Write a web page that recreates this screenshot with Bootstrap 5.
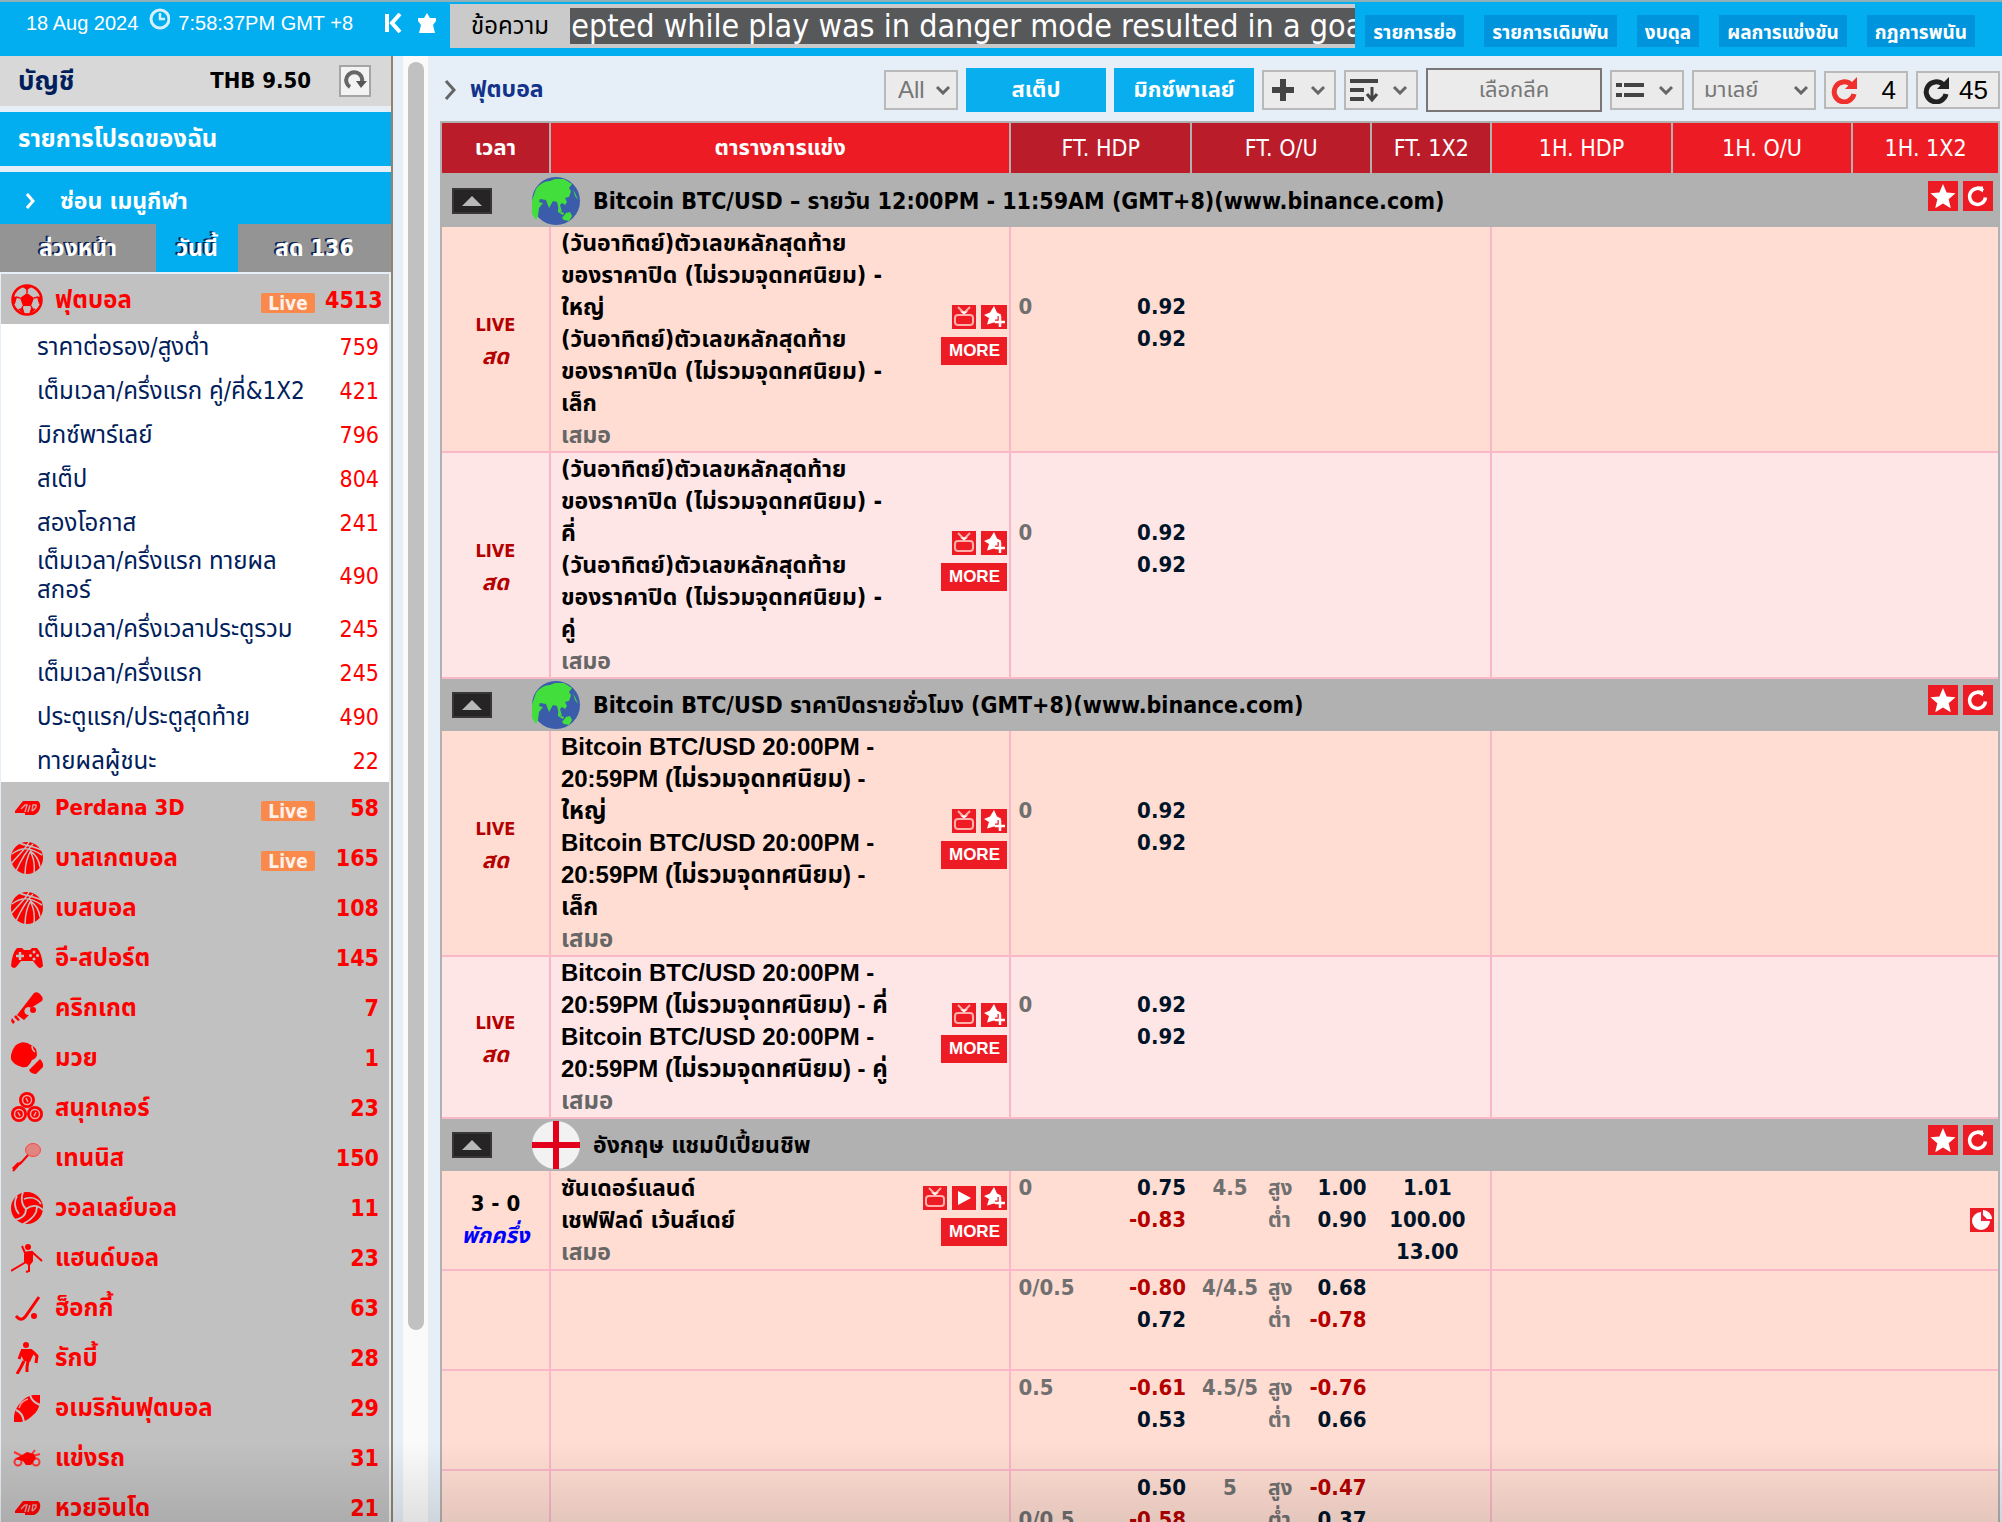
<!DOCTYPE html>
<html lang="th">
<head>
<meta charset="utf-8">
<meta name="viewport" content="width=device-width, initial-scale=1">
<title>ฟุตบอล</title>
<link href="https://cdn.jsdelivr.net/npm/bootstrap@5.3.0/dist/css/bootstrap.min.css" rel="stylesheet">
<script src="https://cdn.jsdelivr.net/npm/bootstrap@5.3.0/dist/js/bootstrap.bundle.min.js"></script>
<style>
:root{--sky:#02adf0;--red:#ed1c24;--deep:#bb1c2a;--pink:#f8b8c8;--grey:#b1b1b1;--page:#e6eef7}
body{font-family:"DejaVu Sans Condensed","Noto Sans Thai","Noto Sans",sans-serif;font-size:22px;line-height:32px;background:var(--page);color:#000;height:100vh;overflow:hidden}
a{text-decoration:none;color:inherit}
svg{display:block;flex:none}
/* top bar */
.topbar{height:56px;background:var(--sky);border-top:2px solid #8fb0b6;color:#fff}
.clockbar{width:450px;font-family:"Liberation Sans",sans-serif;font-size:20px;padding:0 14px 12px 26px}
.msgbox{background:#cacaca;height:44px;margin-top:2px;color:#000}
.msglabel{width:120px;font-size:24px;text-align:center}
.ticker{background:#57585a;color:#fff;height:36px;font-size:32px;line-height:36px;white-space:nowrap}
.ticker span{margin-right:-8px}
.toplinks{padding:13px 27px 0 10px;gap:20px}
.toplinks a{background:#0094dc;height:32px;line-height:34px;font-size:19px;font-weight:bold;padding:0 8px}
/* sidebar */
.side{width:393px;border-right:2px solid #95826a;overflow:hidden}
.acct{height:50px;background:#d8d8d8;padding:0 20px 0 18px;font-weight:bold}
.acct .who{color:#00205b;font-size:26px}
.reload{width:32px;height:32px;background:#f3f3f3;border:2px solid #a5a5a5;padding:0}
.sidebar-bar{background:var(--sky);color:#fff;font-weight:bold;font-size:24px;margin-top:6px;padding:0 18px;height:54px}
.sidebar-bar.sub{height:52px;padding-top:6px;font-size:23px}
.daytabs{height:48px}
.daytabs a{background:#949494;color:#fff;font-weight:bold;font-size:23px;text-shadow:-2px -1px 0 #0a2050}
.daytabs a.now{background:var(--sky)}
.sports{margin:2px 2px 0 1px;background:#c1c1c1}
.sport{height:50px;color:#f00;font-weight:bold;padding:2px 10px 0;gap:12px;font-size:24px}
.sport svg{width:32px;height:32px;fill:#f00;stroke:#f00;stroke-width:0}
.sport .latin{font-size:22px}
.livetag{background:#f98a4b;color:#fff0ea;font-size:19px;line-height:20px;height:20px;width:54px;text-align:center;margin-top:6px;border-radius:2px}
.cnt{width:54px;margin-left:-2px;text-align:right;font-size:23px}
.submenu{background:#fff}
.submenu a{color:#00205b;padding:2px 10px 0 36px;height:44px;line-height:29px;font-size:24px}
.submenu b{color:#f00;font-weight:normal;font-size:23px}
.submenu .tall{height:62px}
.track{width:27px;margin-left:9px;background:#fafafa;border:solid #eee;border-width:0 1px;padding:6px 4px 0 5px}
.thumb{height:1268px;max-height:88%;border-radius:8px;background:#c1c1c1;width:16px}
/* toolbar */
.main{padding:0 2px 0 11px;overflow:hidden}
.tools{height:65px;padding-top:2px;gap:8px}
.tools h1{font-size:23px;font-weight:bold;color:#12338a;margin:0}
.ctl{height:40px;background:#ebebeb;border:2px solid #b9b9b9;border-radius:0;color:#777;padding:0 8px;font-size:22px;width:74px}
select.ctl{appearance:none;background:#ebebeb url("data:image/svg+xml,%3Csvg xmlns='http://www.w3.org/2000/svg' width='16' height='10'%3E%3Cpath d='M2 2l6 6 6-6' fill='none' stroke='%23666' stroke-width='3'/%3E%3C/svg%3E") no-repeat right 5px center;padding-left:12px}
select.latin{font-family:"Liberation Sans",sans-serif;font-size:24px}
select.price{width:124px;padding-left:10px}
.go{width:140px;height:44px;background:#08aeee;color:#fff;font-weight:bold;font-size:22px;border:0}
.pick{width:176px;height:44px;border-color:#7a7678}
.tick{width:84px;height:38px;color:#000;font-size:26px;font-family:"Liberation Sans",sans-serif;padding:0 10px 0 5px}
/* odds table */
.odds{width:100%;table-layout:fixed;border-collapse:separate;border-spacing:0;border:2px solid var(--grey)}
.odds th{height:52px;background:var(--red);color:#fff;text-align:center;font-weight:normal;font-size:23px;border-right:2px solid var(--grey);border-bottom:2px solid var(--grey);padding:0}
.odds th.deep{background:var(--deep)}
.odds th.thai{font-weight:bold;font-size:22px}
.odds th:last-child{border-right:0}
.odds td{background:#ffddd2;border-bottom:2px solid var(--pink);padding:0;vertical-align:middle}
.odds tr.alt td{background:#ffe6e6}
.odds td.ln{border-right:2px solid var(--pink)}
.odds tr.league td{background:var(--grey);height:52px;border:0;font-weight:bold;font-size:23px}
.lg{padding:0 5px 0 10px}
.fold{width:40px;height:26px;background:#262424;border:2px solid #383636;padding:0;margin-right:40px}
.badgeflag{margin-right:13px}
.sq{background:var(--red);border:0;padding:0;color:#fff;display:block}
.lgb{margin-bottom:10px;gap:5px}
.when{text-align:center;font-weight:bold}
.when i{font-size:22px}
.odds td.livetxt{color:#b50000;font-size:18px;padding-top:4px}
.team{font-weight:bold;padding-left:10px;width:350px;font-size:23px}
.team.en{font-family:"Liberation Sans","Noto Sans Thai","Noto Sans",sans-serif;font-size:24px}
.drw{color:#666}
.acts{margin:0 2px 8px 0}
.acts div{gap:5px}
.more{width:66px;height:28px;font:bold 17px/28px "Liberation Sans",sans-serif;margin-left:auto}
.h3l{min-height:96px;font-weight:bold;color:#001429}
.hd{color:#707070;padding-left:7px}
.pr{text-align:right;padding-right:6px}
.neg{color:#b50000}
.gl{width:76px;text-align:center;color:#707070}
.ul{width:26px;color:#707070;font-size:21px}
.rowpad{padding:1px 0}
.dusk{position:fixed;left:0;right:0;bottom:0;height:80px;background:linear-gradient(rgba(0,0,0,0),rgba(0,0,0,.1));pointer-events:none}
</style>
</head>
<body class="d-flex flex-column">
<svg width="0" height="0" class="position-absolute">
<defs>
<symbol id="chev" viewBox="0 0 16 10"><path d="M2 2l6 6 6-6" fill="none" stroke="#666" stroke-width="3"/></symbol>
<symbol id="star" viewBox="0 0 30 30"><path d="M15 3l3.600 8.400 8.900.8-6.800 6 2.100 9L15 22.400 7.200 27.200l2.100-9-6.800-6 8.900-.8z" fill="#fff"/></symbol>
<symbol id="spin" viewBox="0 0 30 30"><path d="M20 9.500a8 8 0 1 0 2.500 7" fill="none" stroke="#fff" stroke-width="3.500"/><path d="M14 5.500h6v6z" fill="#fff"/></symbol>
<symbol id="ref" viewBox="0 0 28 28"><path d="M20 8.500A10 10 0 1 0 23 18" fill="none" stroke="currentColor" stroke-width="5"/><path d="M26 1v12H14z" fill="currentColor"/></symbol>
<symbol id="tv" viewBox="0 0 24 24"><g fill="none" stroke="#ffb0ac" stroke-width="2"><rect x="3" y="10" width="18" height="10" rx="3"/><path d="M6 2l6 6 6-6"/></g><path d="M8 6.500h8l-4 3z" fill="#fff"/></symbol>
<symbol id="play" viewBox="0 0 24 24"><path d="M6 5l13 7-13 7z" fill="#fff"/></symbol>
<symbol id="fav" viewBox="0 0 26 24"><path d="M13 1l3 6.500 4 2-2 10-5-2-7 2 2-6.500-5-3 6-2.500z" fill="#fff"/><path d="M19 11v11M14 17h10" stroke="#ed1c24" stroke-width="5"/><path d="M19 11v11M14 17h10" stroke="#fff" stroke-width="2.500"/></symbol>
<symbol id="globe" viewBox="0 0 48 48"><circle cx="24" cy="24" r="24" fill="#3b5bab"/><path d="M4 12Q10 4 18 4l5-2 9 0 8 5-3 4 2 3-2 6-4 1 2 4-2 3-3-2-2 2 2 7-3-2-2-8-4-1-4 7-3-8-6-1-1 3 4 1-4 5-1 8-2 4-4-6-2-8z" fill="#42df3c"/><path d="M30 41l4-5 4-1 2 4-3 5-5-1zM26 31l3 4 3 1-1 2-5-3zM41 12l3 6 2 5-3-4z" fill="#42df3c"/></symbol>
<symbol id="eng" viewBox="0 0 48 48"><circle cx="24" cy="24" r="24" fill="#f2f2f2"/><path d="M21 0h6v21h21v6H27v21h-6V27H0v-6h21z" fill="#e3001b"/></symbol>
<symbol id="up" viewBox="0 0 36 22"><path d="M8 16L18 6l10 10z" fill="#b8b8b8"/></symbol>
<symbol id="basket" viewBox="0 0 32 32"><circle cx="16" cy="16" r="16"/><path d="M8 1c7 3 14 3 22 7M1 12C12 4 20 6 31 13M0 22C8 12 14 8 18 0M5 29C10 18 14 10 22 2M14 33c0-11 2-18 6-25M23 31c1-8 0-15-4-22M29 25c-1-7-5-13-10-16" fill="none" stroke="#c1c1c1" stroke-width="1.500"/></symbol>
<symbol id="fourd" viewBox="0 0 32 32"><path d="M4 19L12 9h15q3 2 2 7t-6 7h-9v-2H4z"/><path d="M10 17l4-4h2l-2 7M19 13l-2 7M21 19l1-6h3q1 3-4 6" fill="none" stroke="#d99" stroke-width="1.500"/></symbol>
</defs>
</svg>

<header class="topbar d-flex flex-shrink-0">
  <div class="clockbar d-flex align-items-center flex-shrink-0">
    <span>18 Aug 2024</span>
    <svg class="mx-2 mb-2" width="24" height="24" viewBox="0 0 24 24" fill="none" stroke="#d5f1fc"><circle cx="14" cy="12" r="9" stroke-width="3"/><path d="M14 6v6h5" stroke-width="2.500"/></svg>
    <span>7:58:37PM GMT +8</span>
    <svg class="ms-auto" width="18" height="20" viewBox="0 0 18 20"><path d="M3 1v18M16 1L8 10l8 9" fill="none" stroke="#fff" stroke-width="4"/></svg>
    <svg class="ms-3" width="18" height="20" viewBox="0 0 18 20"><path d="M9 0l3 5h6v3l-3 4 2 8H1l2-8-3-4V5h6z" fill="#fff"/></svg>
  </div>
  <div class="msgbox d-flex align-items-center flex-grow-1 overflow-hidden">
    <div class="msglabel flex-shrink-0">ข้อความ</div>
    <div class="ticker d-flex justify-content-end flex-grow-1 overflow-hidden"><span class="flex-shrink-0">ccepted while play was in danger mode resulted in a goa</span></div>
  </div>
  <nav class="toplinks d-flex flex-shrink-0">
    <a href="#">รายการย่อ</a><a href="#">รายการเดิมพัน</a><a href="#">งบดุล</a><a href="#">ผลการแข่งขัน</a><a href="#">กฎการพนัน</a>
  </nav>
</header>

<div class="d-flex flex-grow-1 overflow-hidden">
<aside class="side flex-shrink-0">
  <div class="acct d-flex align-items-center">
    <span class="who">บัญชี</span><span class="ms-auto me-4">THB 9.50</span>
    <button class="reload ms-1" aria-label="รีเฟรช"><svg width="28" height="28" viewBox="0 0 28 28"><path d="M9 20a8 8 0 1 1 12-5" fill="none" stroke="#666" stroke-width="4"/><path d="M15 14h11l-6 7z" fill="#555"/></svg></button>
  </div>
  <a href="#" class="sidebar-bar d-flex align-items-center">รายการโปรดของฉัน</a>
  <a href="#" class="sidebar-bar sub d-flex align-items-center"><svg class="mx-2" width="10" height="16" viewBox="0 0 10 16"><path d="M1 1l6 7-6 7" fill="none" stroke="#fff" stroke-width="3"/></svg><span class="ps-3">ซ่อน เมนูกีฬา</span></a>
  <nav class="daytabs d-flex text-center">
    <a href="#" class="d-flex align-items-center justify-content-center" style="width:156px">ล่วงหน้า</a>
    <a href="#" class="now d-flex align-items-center justify-content-center" style="width:82px">วันนี้</a>
    <a href="#" class="flex-grow-1 d-flex align-items-center justify-content-center">สด 136</a>
  </nav>
  <nav class="sports">
    <a href="#" class="sport d-flex align-items-center"><svg viewBox="0 0 32 32"><circle cx="16" cy="16" r="14.500" fill="none" stroke-width="2.500"/><path d="M16 9l7 5-3 8h-8l-3-8zM10 2h12l-6 4zM1 12l5 1-2 7-3-1zM31 12l-5 1 2 7 3-1zM7 25l5-1 2 7zM25 25l-5-1-2 7z"/><path d="M16 9V5M23 14l4-1M20 22l2 4M12 22l-2 4M9 14l-4-1" stroke-width="1.500"/></svg><span>ฟุตบอล</span><span class="livetag ms-auto">Live</span><span class="cnt">4513</span></a>
    <div class="submenu">
      <a href="#" class="d-flex align-items-center justify-content-between"><span>ราคาต่อรอง/สูงต่ำ</span><b>759</b></a>
      <a href="#" class="d-flex align-items-center justify-content-between"><span>เต็มเวลา/ครึ่งแรก คู่/คี่&amp;1X2</span><b>421</b></a>
      <a href="#" class="d-flex align-items-center justify-content-between"><span>มิกซ์พาร์เลย์</span><b>796</b></a>
      <a href="#" class="d-flex align-items-center justify-content-between"><span>สเต็ป</span><b>804</b></a>
      <a href="#" class="d-flex align-items-center justify-content-between"><span>สองโอกาส</span><b>241</b></a>
      <a href="#" class="tall d-flex align-items-center justify-content-between"><span>เต็มเวลา/ครึ่งแรก ทายผล<br>สกอร์</span><b>490</b></a>
      <a href="#" class="d-flex align-items-center justify-content-between"><span>เต็มเวลา/ครึ่งเวลาประตูรวม</span><b>245</b></a>
      <a href="#" class="d-flex align-items-center justify-content-between"><span>เต็มเวลา/ครึ่งแรก</span><b>245</b></a>
      <a href="#" class="d-flex align-items-center justify-content-between"><span>ประตูแรก/ประตูสุดท้าย</span><b>490</b></a>
      <a href="#" class="d-flex align-items-center justify-content-between"><span>ทายผลผู้ชนะ</span><b>22</b></a>
    </div>
    <a href="#" class="sport d-flex align-items-center"><svg><use href="#fourd"/></svg><span class="latin">Perdana 3D</span><span class="livetag ms-auto">Live</span><span class="cnt">58</span></a>
    <a href="#" class="sport d-flex align-items-center"><svg><use href="#basket"/></svg><span>บาสเกตบอล</span><span class="livetag ms-auto">Live</span><span class="cnt">165</span></a>
    <a href="#" class="sport d-flex align-items-center"><svg><use href="#basket"/></svg><span>เบสบอล</span><span class="cnt ms-auto">108</span></a>
    <a href="#" class="sport d-flex align-items-center"><svg viewBox="0 0 32 32"><path d="M6 6h5l2 2h6l2-2h5q5 5 6 18-3 4-6 0l-4-5H10l-4 5q-3 4-6 0Q1 11 6 6z"/><path d="M9 10v8M5 14h8" stroke="#c1c1c1" stroke-width="2.500"/><g fill="#c1c1c1"><circle cx="23" cy="10" r="1.500"/><circle cx="23" cy="17" r="1.500"/><circle cx="19.500" cy="13.500" r="1.500"/><circle cx="26.500" cy="13.500" r="1.500"/></g></svg><span>อี-สปอร์ต</span><span class="cnt ms-auto">145</span></a>
    <a href="#" class="sport d-flex align-items-center"><svg viewBox="0 0 32 32"><path d="M23 1q3-2 6 1 4 4 2 7L20 16a4 4 0 1 0-2 7l-5 5-7-5zM5 23l4 5-2 1-4-4zM1 26l3 4-2 2-2-3z"/><circle cx="22" cy="18" r="3"/></svg><span>คริกเกต</span><span class="cnt ms-auto">7</span></a>
    <a href="#" class="sport d-flex align-items-center"><svg viewBox="0 0 32 32"><path d="M4 4Q12-3 20 3q6 2 6 10-1 4-5 5-4 9-10 7Q-2 21 0 13q1-5 4-9z"/><path d="M29 17q4 4 3 8l-7 7q-5 0-7-4z"/><path d="M21 4q0 4 3 6" fill="none" stroke="#c1c1c1" stroke-width="1.500"/></svg><span>มวย</span><span class="cnt ms-auto">1</span></a>
    <a href="#" class="sport d-flex align-items-center"><svg viewBox="0 0 32 32"><circle cx="16" cy="8" r="8"/><circle cx="8" cy="22" r="8"/><circle cx="24" cy="22" r="8"/><g fill="none" stroke="#e9a9a9" stroke-width="1.500"><circle cx="16" cy="8" r="4.500"/><circle cx="8" cy="22" r="4.500"/><circle cx="24" cy="22" r="4.500"/><path d="M15 6l2 4M7 20l2 4M23 24l2-4"/></g></svg><span>สนุกเกอร์</span><span class="cnt ms-auto">23</span></a>
    <a href="#" class="sport d-flex align-items-center"><svg viewBox="0 0 32 32"><ellipse cx="22" cy="8" rx="7.500" ry="6.500" fill="#e08580" stroke="#f44" stroke-width="1"/><path d="M17 13L9 22M10 20l-8 9" fill="none" stroke-width="2"/><path d="M8 21l-6 6" stroke-width="3"/></svg><span>เทนนิส</span><span class="cnt ms-auto">150</span></a>
    <a href="#" class="sport d-flex align-items-center"><svg viewBox="0 0 32 32"><circle cx="16" cy="16" r="16"/><path d="M15 17C10 12 10 6 12 0M15 17C22 12 28 14 32 18M15 17c0 7-5 10-12 11M8 22C3 16 3 9 6 4M13 7c8-3 14 0 17 5M26 15c0 8-6 13-14 17" fill="none" stroke="#c1c1c1" stroke-width="1.800"/></svg><span>วอลเลย์บอล</span><span class="cnt ms-auto">11</span></a>
    <a href="#" class="sport d-flex align-items-center"><svg viewBox="0 0 32 32"><circle cx="17" cy="5" r="3"/><path d="M11 4l3 7 6-1 1 9-3 4 0 6-3 1M15 20L0 29M21 10l10 9M14 12l0 7" fill="none" stroke-width="2"/><path d="M14 10l8-1 0 9-5 5-4-3z"/></svg><span>แฮนด์บอล</span><span class="cnt ms-auto">23</span></a>
    <a href="#" class="sport d-flex align-items-center"><svg viewBox="0 0 32 32"><path d="M28 5L14 25q-4 5-9-1" fill="none" stroke-width="3"/><circle cx="23" cy="24" r="3"/></svg><span>ฮ็อกกี้</span><span class="cnt ms-auto">63</span></a>
    <a href="#" class="sport d-flex align-items-center"><svg viewBox="0 0 32 32"><circle cx="15" cy="3" r="3"/><path d="M10 7h11l2 4-4 9-6-1-3-6z"/><path d="M11 9l-3 8M21 9l5 5-1 7M13 19l-3 6-4 7M17 19l-1 6 0 5" fill="none" stroke-width="3"/></svg><span>รักบี้</span><span class="cnt ms-auto">28</span></a>
    <a href="#" class="sport d-flex align-items-center"><svg viewBox="0 0 32 32"><path d="M22 3h7v7q-1 9-8 14-5 5-11 6H3v-6Q4 16 11 9q5-5 11-6z"/><path d="M5 18q7 3 8 12M19 3q2 7 10 10" fill="none" stroke="#c1c1c1" stroke-width="2"/><path d="M8 16q2-7 9-9" fill="none" stroke="#e99" stroke-width="1.500"/></svg><span>อเมริกันฟุตบอล</span><span class="cnt ms-auto">29</span></a>
    <a href="#" class="sport d-flex align-items-center"><svg viewBox="0 0 32 32"><g fill="none" stroke-width="2" stroke="#f33"><circle cx="7" cy="20" r="3.500"/><circle cx="25" cy="20" r="3.500"/><path d="M3 10l8 4M29 12l-7 2M24 8l-3 4"/></g><path d="M11 13l5-3 7 2 2 4-5 7h-5l-3-4-8-2z"/></svg><span>แข่งรถ</span><span class="cnt ms-auto">31</span></a>
    <a href="#" class="sport d-flex align-items-center"><svg><use href="#fourd"/></svg><span>หวยอินโด</span><span class="cnt ms-auto">21</span></a>
  </nav>
</aside>
<div class="track flex-shrink-0"><div class="thumb"></div></div>

<main class="main flex-grow-1">
  <div class="tools d-flex align-items-center">
    <svg class="ms-1" width="14" height="20" viewBox="0 0 14 20"><path d="M2 1l8 9-8 9" fill="none" stroke="#666" stroke-width="3"/></svg>
    <h1 class="me-auto ms-1">ฟุตบอล</h1>
    <select class="ctl latin" aria-label="ตัวกรอง"><option>All</option></select>
    <button class="go">สเต็ป</button>
    <button class="go">มิกซ์พาเลย์</button>
    <button class="ctl d-flex align-items-center justify-content-between" aria-label="เพิ่ม"><svg width="22" height="24" viewBox="0 0 22 24"><path d="M11 1v22M0 12h22" stroke="#444" stroke-width="6"/></svg><svg width="16" height="10"><use href="#chev"/></svg></button>
    <button class="ctl d-flex align-items-center justify-content-between ps-1" aria-label="เรียง"><svg width="30" height="24" viewBox="0 0 30 24"><path d="M0 3h28M0 12h14M0 21h14" stroke="#444" stroke-width="4"/><path d="M22 9v12M17 16l5 6 5-6" stroke="#444" stroke-width="3" fill="none"/></svg><svg width="16" height="10"><use href="#chev"/></svg></button>
    <button class="ctl pick">เลือกลีค</button>
    <button class="ctl d-flex align-items-center justify-content-between ps-1" aria-label="มุมมอง"><svg width="28" height="14" viewBox="0 0 28 14"><path d="M0 2h6M8 2h20M0 12h6M8 12h20" stroke="#444" stroke-width="4"/></svg><svg width="16" height="10"><use href="#chev"/></svg></button>
    <select class="ctl price" aria-label="ราคา"><option>มาเลย์</option></select>
    <button class="ctl tick d-flex align-items-center justify-content-between"><svg width="28" height="28" color="#f0302c"><use href="#ref"/></svg><span>4</span></button>
    <button class="ctl tick d-flex align-items-center justify-content-between"><svg width="28" height="28" color="#222"><use href="#ref"/></svg><span>45</span></button>
  </div>
  <table class="odds">
    <colgroup><col style="width:7%"><col style="width:29.600%"><col style="width:11.600%"><col style="width:11.600%"><col style="width:7.700%"><col style="width:11.600%"><col style="width:11.600%"><col></colgroup>
    <thead><tr><th class="deep thai">เวลา</th><th class="thai">ตารางการแข่ง</th><th class="deep">FT. HDP</th><th class="deep">FT. O/U</th><th class="deep">FT. 1X2</th><th>1H. HDP</th><th>1H. O/U</th><th>1H. 1X2</th></tr></thead>
    <tbody>
    <tr class="league"><td colspan="8"><div class="lg d-flex align-items-center"><button class="fold" aria-label="ย่อ"><svg width="36" height="22"><use href="#up"/></svg></button><svg class="badgeflag" width="48" height="48"><use href="#globe"/></svg><span>Bitcoin BTC/USD – รายวัน 12:00PM - 11:59AM (GMT+8)(www.binance.com)</span><span class="lgb d-flex ms-auto"><button class="sq" aria-label="โปรด"><svg width="30" height="30"><use href="#star"/></svg></button><button class="sq" aria-label="รีเฟรช"><svg width="30" height="30"><use href="#spin"/></svg></button></span></div></td></tr>
    <tr><td class="ln when livetxt">LIVE<br><i>สด</i></td>
      <td class="ln"><div class="d-flex align-items-center justify-content-between"><div class="team">(วันอาทิตย์)ตัวเลขหลักสุดท้าย<br>ของราคาปิด (ไม่รวมจุดทศนิยม) -<br>ใหญ่<br>(วันอาทิตย์)ตัวเลขหลักสุดท้าย<br>ของราคาปิด (ไม่รวมจุดทศนิยม) -<br>เล็ก<br><span class="drw">เสมอ</span></div><div class="acts"><div class="d-flex justify-content-end mb-2"><button class="sq" aria-label="ทีวี"><svg width="24" height="24"><use href="#tv"/></svg></button><button class="sq" aria-label="โปรด"><svg width="26" height="24"><use href="#fav"/></svg></button></div><button class="sq more">MORE</button></div></div></td>
      <td><div class="h3l d-flex"><div class="hd">0</div><div class="pr ms-auto">0.92<br>0.92</div></div></td><td></td><td class="ln"></td><td></td><td></td><td></td></tr>
    <tr class="alt"><td class="ln when livetxt">LIVE<br><i>สด</i></td>
      <td class="ln"><div class="d-flex align-items-center justify-content-between"><div class="team">(วันอาทิตย์)ตัวเลขหลักสุดท้าย<br>ของราคาปิด (ไม่รวมจุดทศนิยม) -<br>คี่<br>(วันอาทิตย์)ตัวเลขหลักสุดท้าย<br>ของราคาปิด (ไม่รวมจุดทศนิยม) -<br>คู่<br><span class="drw">เสมอ</span></div><div class="acts"><div class="d-flex justify-content-end mb-2"><button class="sq" aria-label="ทีวี"><svg width="24" height="24"><use href="#tv"/></svg></button><button class="sq" aria-label="โปรด"><svg width="26" height="24"><use href="#fav"/></svg></button></div><button class="sq more">MORE</button></div></div></td>
      <td><div class="h3l d-flex"><div class="hd">0</div><div class="pr ms-auto">0.92<br>0.92</div></div></td><td></td><td class="ln"></td><td></td><td></td><td></td></tr>
    <tr class="league"><td colspan="8"><div class="lg d-flex align-items-center"><button class="fold" aria-label="ย่อ"><svg width="36" height="22"><use href="#up"/></svg></button><svg class="badgeflag" width="48" height="48"><use href="#globe"/></svg><span>Bitcoin BTC/USD ราคาปิดรายชั่วโมง (GMT+8)(www.binance.com)</span><span class="lgb d-flex ms-auto"><button class="sq" aria-label="โปรด"><svg width="30" height="30"><use href="#star"/></svg></button><button class="sq" aria-label="รีเฟรช"><svg width="30" height="30"><use href="#spin"/></svg></button></span></div></td></tr>
    <tr><td class="ln when livetxt">LIVE<br><i>สด</i></td>
      <td class="ln"><div class="d-flex align-items-center justify-content-between"><div class="team en">Bitcoin BTC/USD 20:00PM -<br>20:59PM (ไม่รวมจุดทศนิยม) -<br>ใหญ่<br>Bitcoin BTC/USD 20:00PM -<br>20:59PM (ไม่รวมจุดทศนิยม) -<br>เล็ก<br><span class="drw">เสมอ</span></div><div class="acts"><div class="d-flex justify-content-end mb-2"><button class="sq" aria-label="ทีวี"><svg width="24" height="24"><use href="#tv"/></svg></button><button class="sq" aria-label="โปรด"><svg width="26" height="24"><use href="#fav"/></svg></button></div><button class="sq more">MORE</button></div></div></td>
      <td><div class="h3l d-flex"><div class="hd">0</div><div class="pr ms-auto">0.92<br>0.92</div></div></td><td></td><td class="ln"></td><td></td><td></td><td></td></tr>
    <tr class="alt"><td class="ln when livetxt">LIVE<br><i>สด</i></td>
      <td class="ln"><div class="d-flex align-items-center justify-content-between"><div class="team en">Bitcoin BTC/USD 20:00PM -<br>20:59PM (ไม่รวมจุดทศนิยม) - คี่<br>Bitcoin BTC/USD 20:00PM -<br>20:59PM (ไม่รวมจุดทศนิยม) - คู่<br><span class="drw">เสมอ</span></div><div class="acts"><div class="d-flex justify-content-end mb-2"><button class="sq" aria-label="ทีวี"><svg width="24" height="24"><use href="#tv"/></svg></button><button class="sq" aria-label="โปรด"><svg width="26" height="24"><use href="#fav"/></svg></button></div><button class="sq more">MORE</button></div></div></td>
      <td><div class="h3l d-flex"><div class="hd">0</div><div class="pr ms-auto">0.92<br>0.92</div></div></td><td></td><td class="ln"></td><td></td><td></td><td></td></tr>
    <tr class="league"><td colspan="8"><div class="lg d-flex align-items-center"><button class="fold" aria-label="ย่อ"><svg width="36" height="22"><use href="#up"/></svg></button><svg class="badgeflag" width="48" height="48"><use href="#eng"/></svg><span>อังกฤษ แชมป์เปี้ยนชิพ</span><span class="lgb d-flex ms-auto"><button class="sq" aria-label="โปรด"><svg width="30" height="30"><use href="#star"/></svg></button><button class="sq" aria-label="รีเฟรช"><svg width="30" height="30"><use href="#spin"/></svg></button></span></div></td></tr>
    <tr><td class="ln when">3 - 0<br><i style="color:#00f">พักครึ่ง</i></td>
      <td class="ln"><div class="rowpad d-flex align-items-center justify-content-between"><div class="team">ซันเดอร์แลนด์<br>เชฟฟิลด์ เว้นส์เดย์<br><span class="drw">เสมอ</span></div><div class="acts"><div class="d-flex justify-content-end mb-2"><button class="sq" aria-label="ทีวี"><svg width="24" height="24"><use href="#tv"/></svg></button><button class="sq" aria-label="เล่น"><svg width="24" height="24"><use href="#play"/></svg></button><button class="sq" aria-label="โปรด"><svg width="26" height="24"><use href="#fav"/></svg></button></div><button class="sq more">MORE</button></div></div></td>
      <td><div class="h3l d-flex"><div class="hd">0</div><div class="pr ms-auto">0.75<br><span class="neg">-0.83</span></div></div></td>
      <td><div class="h3l d-flex"><div class="gl">4.5</div><div class="ul">สูง<br>ต่ำ</div><div class="pr ms-auto">1.00<br>0.90</div></div></td>
      <td class="ln"><div class="h3l text-center pe-2">1.01<br>100.00<br>13.00</div></td><td></td><td></td>
      <td><button class="sq ms-auto me-1" aria-label="เวลา"><svg width="24" height="24" viewBox="0 0 24 24"><path d="M11 4v9h9a9 9 0 1 1-9-9z" fill="#fff"/><path d="M13 2a9 9 0 0 1 9 9h-5l-4-4z" fill="#fff"/><path d="M12 3v9h9" fill="none" stroke="#f26" stroke-width="1"/></svg></button></td></tr>
    <tr><td class="ln"></td><td class="ln"></td>
      <td><div class="rowpad"><div class="h3l d-flex"><div class="hd">0/0.5</div><div class="pr ms-auto"><span class="neg">-0.80</span><br>0.72</div></div></div></td>
      <td><div class="h3l d-flex"><div class="gl">4/4.5</div><div class="ul">สูง<br>ต่ำ</div><div class="pr ms-auto">0.68<br><span class="neg">-0.78</span></div></div></td><td class="ln"></td><td></td><td></td><td></td></tr>
    <tr><td class="ln"></td><td class="ln"></td>
      <td><div class="rowpad"><div class="h3l d-flex"><div class="hd">0.5</div><div class="pr ms-auto"><span class="neg">-0.61</span><br>0.53</div></div></div></td>
      <td><div class="h3l d-flex"><div class="gl">4.5/5</div><div class="ul">สูง<br>ต่ำ</div><div class="pr ms-auto"><span class="neg">-0.76</span><br>0.66</div></div></td><td class="ln"></td><td></td><td></td><td></td></tr>
    <tr><td class="ln"></td><td class="ln"></td>
      <td><div class="rowpad"><div class="h3l d-flex"><div class="hd"><br>0/0.5</div><div class="pr ms-auto">0.50<br><span class="neg">-0.58</span></div></div></div></td>
      <td><div class="h3l d-flex"><div class="gl">5</div><div class="ul">สูง<br>ต่ำ</div><div class="pr ms-auto"><span class="neg">-0.47</span><br>0.37</div></div></td><td class="ln"></td><td></td><td></td><td></td></tr>
    </tbody>
  </table>
</main>
</div>
<div class="dusk"></div>
</body>
</html>
